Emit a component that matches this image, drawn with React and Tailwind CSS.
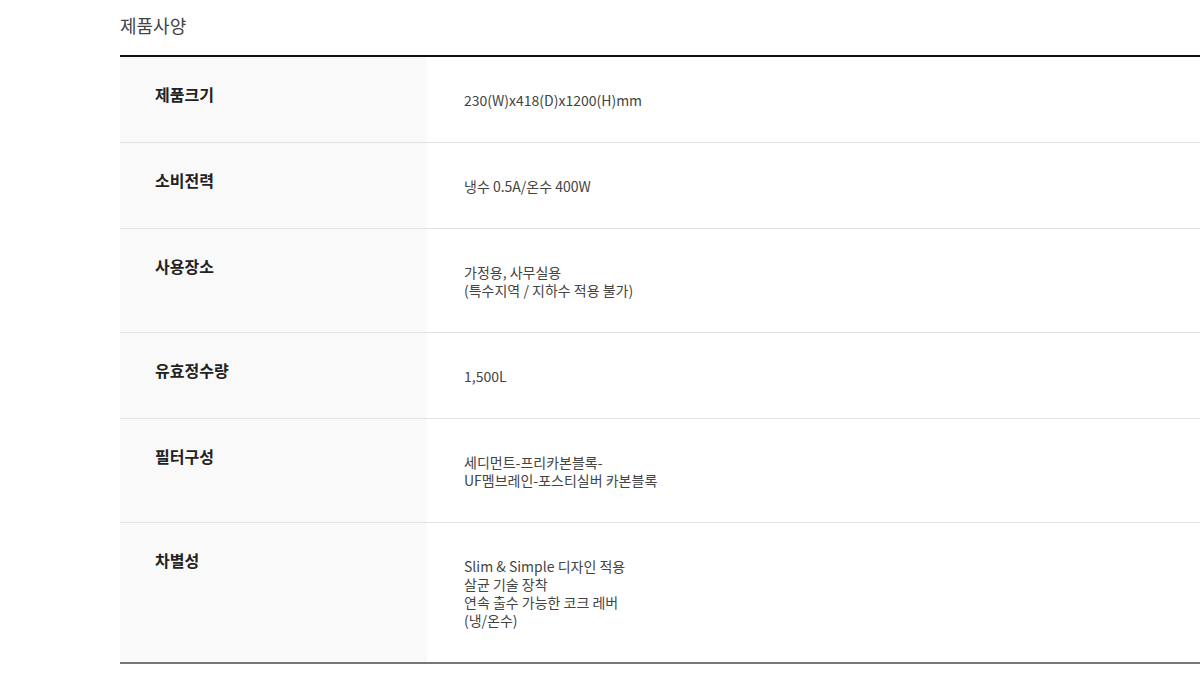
export default function App() {
  const rows = [
    ["제품크기", ["230(W)x418(D)x1200(H)mm"]],
    ["소비전력", ["냉수 0.5A/온수 400W"]],
    ["사용장소", ["가정용, 사무실용", "(특수지역 / 지하수 적용 불가)"]],
    ["유효정수량", ["1,500L"]],
    ["필터구성", ["세디먼트-프리카본블록-", "UF멤브레인-포스티실버 카본블록"]],
    ["차별성", ["Slim & Simple 디자인 적용", "살균 기술 장착", "연속 출수 가능한 코크 레버", "(냉/온수)"]],
  ];
  return (
    <div className="min-h-[682px] w-[1200px] overflow-hidden bg-white" style={{ fontFamily: '"Noto Sans CJK KR", "Noto Sans", sans-serif' }}>
      <div className="pl-[120px]">
        <h2 className="pt-[12px] h-[55px] text-[18px] leading-[26px] font-normal text-[#444]">제품사양</h2>
        <div className="w-[1100px] border-t-2 border-t-[#111] border-b-2 border-b-[#777]">
          {rows.map(([label, vals], i) => (
            <div key={i} className={"flex " + (i < rows.length - 1 ? "border-b border-[#e2e2e2]" : "")}>
              <div className="w-[307px] shrink-0 bg-[#f9f9f9] pl-[35px] pt-[26px] text-[16px] leading-[22px] font-bold text-[#222]">{label}</div>
              <div className="pl-[37px] pt-[34px] pb-[33px] text-[14px] leading-[18px] text-[#444]">
                {vals.map((v, j) => (
                  <div key={j}>{v}</div>
                ))}
              </div>
            </div>
          ))}
        </div>
      </div>
    </div>
  );
}
